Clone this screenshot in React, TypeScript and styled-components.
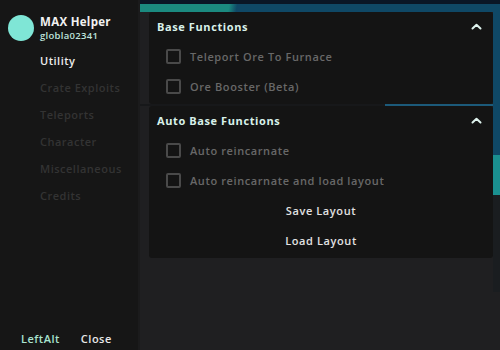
import React from "react";
import styled, { createGlobalStyle } from "styled-components";

const Global = createGlobalStyle`
  html, body { margin: 0; padding: 0; background: #1f1f21; }
  body { font-family: "Open Sans", "Noto Sans", sans-serif; }
  * { box-sizing: border-box; }
`;

const Frame = styled.div`
  display: flex;
  width: 500px;
  height: 350px;
  overflow: hidden;
`;

const Sidebar = styled.aside`
  width: 140px;
  flex: none;
  background: #161616;
  border-right: 2px solid #1b1b1c;
  display: flex;
  flex-direction: column;
  padding: 12px 0 4px 0;
`;

const Profile = styled.div`
  display: flex;
  align-items: center;
  gap: 6px;
  padding-left: 8px;
`;

const Avatar = styled.div`
  width: 26px;
  height: 26px;
  border-radius: 50%;
  background: #7fe6d6;
  flex: none;
`;

const ProfileText = styled.div`
  display: flex;
  flex-direction: column;
  line-height: 14px;
  padding-top: 3px;
`;

const Name = styled.span`
  color: #f2f2f2;
  font-weight: 700;
  font-size: 11.5px;
  letter-spacing: 0.3px;
`;

const Handle = styled.span`
  color: #bfe3dc;
  font-size: 9.5px;
  font-weight: 600;
  letter-spacing: 0.3px;
`;

const Nav = styled.nav`
  display: flex;
  flex-direction: column;
  padding: 4px 0 0 40px;
`;

const NavItem = styled.div<{ $active?: boolean }>`
  height: 27px;
  display: flex;
  align-items: center;
  font-size: 11px;
  font-weight: 600;
  letter-spacing: 0.5px;
  color: ${(p) => (p.$active ? "#ececec" : "#333333")};
`;

const Footer = styled.div`
  margin-top: auto;
  display: flex;
  gap: 21px;
  padding-left: 21px;
  font-size: 11px;
  font-weight: 600;
  letter-spacing: 0.5px;
`;

const FootKey = styled.span`
  color: #a9e3cf;
`;

const FootClose = styled.span`
  color: #e8e8e8;
`;

const Main = styled.main`
  flex: 1;
  display: flex;
  flex-direction: column;
  gap: 2px;
  padding: 12px 7px 0 9px;
  background:
    linear-gradient(#0a1626, #0a1626) left top / 100% 4px no-repeat,
    linear-gradient(100deg, #1b8a80 0 88px, #0f4866 96px) 0 4px / 100% 8px no-repeat,
    linear-gradient(to bottom, #0f4866 0 143px, #1a9090 143px 183px, #1a1d20 183px 280px) right 0 top 12px / 7px 280px no-repeat,
    linear-gradient(to right, #1c5a7a, #1c5a7a) right 7px top 104px / 108px 2px no-repeat,
    linear-gradient(#17181a, #17181a) 0 104px / 100% 2px no-repeat,
    #1f1f21;
`;

const Panel = styled.section`
  background: #141414;
  border-radius: 3px;
  display: flex;
  flex-direction: column;
  padding-bottom: 2px;
`;

const PanelHeader = styled.header`
  height: 30px;
  display: flex;
  align-items: center;
  justify-content: space-between;
  padding: 0 11px 1px 8px;
`;

const PanelTitle = styled.span`
  color: #d9f1ea;
  font-size: 11px;
  font-weight: 700;
  letter-spacing: 0.6px;
`;

const Row = styled.div`
  height: 30px;
  display: flex;
  align-items: center;
  gap: 9px;
  padding: 0 0 1px 17px;
`;

const Box = styled.span`
  width: 15px;
  height: 15px;
  border: 2px solid #4a4a4a;
  border-radius: 2px;
  flex: none;
`;

const Label = styled.span`
  color: #686868;
  font-size: 11px;
  font-weight: 600;
  letter-spacing: 0.6px;
`;

const ActionRow = styled.div`
  height: 30px;
  display: flex;
  align-items: center;
  justify-content: center;
  padding-bottom: 1px;
  color: #e2e2e2;
  font-size: 11px;
  font-weight: 600;
  letter-spacing: 0.6px;
`;

const Chevron = () => (
  <svg width="11" height="7" viewBox="0 0 11 7">
    <path d="M1.5 5.5 L5.5 1.8 L9.5 5.5" fill="none" stroke="#dff3ee" strokeWidth="2" strokeLinecap="round" strokeLinejoin="round" />
  </svg>
);

const Check = ({ label }: { label: string }) => (
  <Row>
    <Box />
    <Label>{label}</Label>
  </Row>
);

export default function App() {
  return (
    <>
      <Global />
      <Frame>
        <Sidebar>
          <Profile>
            <Avatar />
            <ProfileText>
              <Name>MAX Helper</Name>
              <Handle>globla02341</Handle>
            </ProfileText>
          </Profile>
          <Nav>
            <NavItem $active>Utility</NavItem>
            <NavItem>Crate Exploits</NavItem>
            <NavItem>Teleports</NavItem>
            <NavItem>Character</NavItem>
            <NavItem>Miscellaneous</NavItem>
            <NavItem>Credits</NavItem>
          </Nav>
          <Footer>
            <FootKey>LeftAlt</FootKey>
            <FootClose>Close</FootClose>
          </Footer>
        </Sidebar>
        <Main>
          <Panel>
            <PanelHeader>
              <PanelTitle>Base Functions</PanelTitle>
              <Chevron />
            </PanelHeader>
            <Check label="Teleport Ore To Furnace" />
            <Check label="Ore Booster (Beta)" />
          </Panel>
          <Panel>
            <PanelHeader>
              <PanelTitle>Auto Base Functions</PanelTitle>
              <Chevron />
            </PanelHeader>
            <Check label="Auto reincarnate" />
            <Check label="Auto reincarnate and load layout" />
            <ActionRow>Save Layout</ActionRow>
            <ActionRow>Load Layout</ActionRow>
          </Panel>
        </Main>
      </Frame>
    </>
  );
}
